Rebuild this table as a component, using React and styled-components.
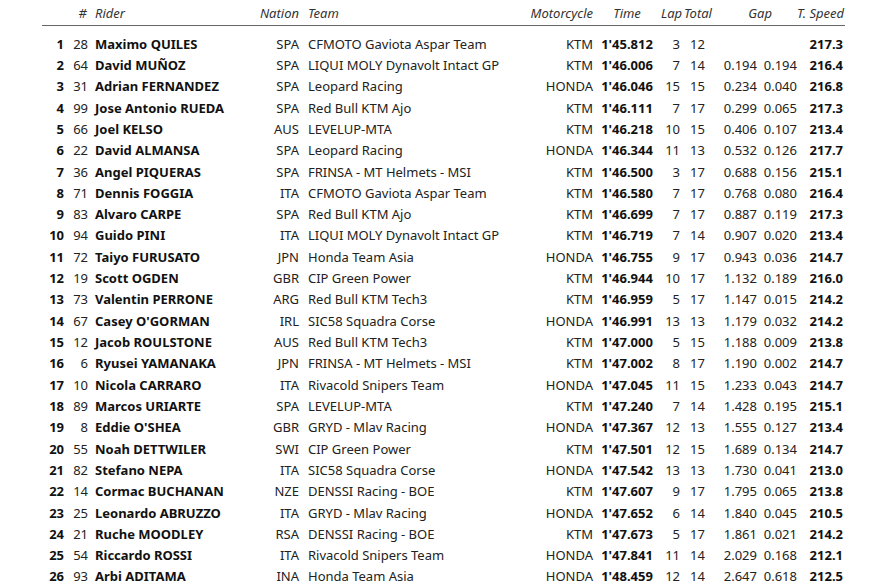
import React from "react";
import styled, { createGlobalStyle } from "styled-components";

const GlobalStyle = createGlobalStyle`
  body {
    margin: 0;
    background: #fff;
    font-family: "Noto Sans", "Open Sans", sans-serif;
  }
`;

const rows = [
  [1, 28, "Maximo QUILES", "SPA", "CFMOTO Gaviota Aspar Team", "KTM", "1'45.812", 3, 12, "", "", "217.3"],
  [2, 64, "David MUÑOZ", "SPA", "LIQUI MOLY Dynavolt Intact GP", "KTM", "1'46.006", 7, 14, "0.194", "0.194", "216.4"],
  [3, 31, "Adrian FERNANDEZ", "SPA", "Leopard Racing", "HONDA", "1'46.046", 15, 15, "0.234", "0.040", "216.8"],
  [4, 99, "Jose Antonio RUEDA", "SPA", "Red Bull KTM Ajo", "KTM", "1'46.111", 7, 17, "0.299", "0.065", "217.3"],
  [5, 66, "Joel KELSO", "AUS", "LEVELUP-MTA", "KTM", "1'46.218", 10, 15, "0.406", "0.107", "213.4"],
  [6, 22, "David ALMANSA", "SPA", "Leopard Racing", "HONDA", "1'46.344", 11, 13, "0.532", "0.126", "217.7"],
  [7, 36, "Angel PIQUERAS", "SPA", "FRINSA - MT Helmets - MSI", "KTM", "1'46.500", 3, 17, "0.688", "0.156", "215.1"],
  [8, 71, "Dennis FOGGIA", "ITA", "CFMOTO Gaviota Aspar Team", "KTM", "1'46.580", 7, 17, "0.768", "0.080", "216.4"],
  [9, 83, "Alvaro CARPE", "SPA", "Red Bull KTM Ajo", "KTM", "1'46.699", 7, 17, "0.887", "0.119", "217.3"],
  [10, 94, "Guido PINI", "ITA", "LIQUI MOLY Dynavolt Intact GP", "KTM", "1'46.719", 7, 14, "0.907", "0.020", "213.4"],
  [11, 72, "Taiyo FURUSATO", "JPN", "Honda Team Asia", "HONDA", "1'46.755", 9, 17, "0.943", "0.036", "214.7"],
  [12, 19, "Scott OGDEN", "GBR", "CIP Green Power", "KTM", "1'46.944", 10, 17, "1.132", "0.189", "216.0"],
  [13, 73, "Valentin PERRONE", "ARG", "Red Bull KTM Tech3", "KTM", "1'46.959", 5, 17, "1.147", "0.015", "214.2"],
  [14, 67, "Casey O'GORMAN", "IRL", "SIC58 Squadra Corse", "HONDA", "1'46.991", 13, 13, "1.179", "0.032", "214.2"],
  [15, 12, "Jacob ROULSTONE", "AUS", "Red Bull KTM Tech3", "KTM", "1'47.000", 5, 15, "1.188", "0.009", "213.8"],
  [16, 6, "Ryusei YAMANAKA", "JPN", "FRINSA - MT Helmets - MSI", "KTM", "1'47.002", 8, 17, "1.190", "0.002", "214.7"],
  [17, 10, "Nicola CARRARO", "ITA", "Rivacold Snipers Team", "HONDA", "1'47.045", 11, 15, "1.233", "0.043", "214.7"],
  [18, 89, "Marcos URIARTE", "SPA", "LEVELUP-MTA", "KTM", "1'47.240", 7, 14, "1.428", "0.195", "215.1"],
  [19, 8, "Eddie O'SHEA", "GBR", "GRYD - Mlav Racing", "HONDA", "1'47.367", 12, 13, "1.555", "0.127", "213.4"],
  [20, 55, "Noah DETTWILER", "SWI", "CIP Green Power", "KTM", "1'47.501", 12, 15, "1.689", "0.134", "214.7"],
  [21, 82, "Stefano NEPA", "ITA", "SIC58 Squadra Corse", "HONDA", "1'47.542", 13, 13, "1.730", "0.041", "213.0"],
  [22, 14, "Cormac BUCHANAN", "NZE", "DENSSI Racing - BOE", "KTM", "1'47.607", 9, 17, "1.795", "0.065", "213.8"],
  [23, 25, "Leonardo ABRUZZO", "ITA", "GRYD - Mlav Racing", "HONDA", "1'47.652", 6, 14, "1.840", "0.045", "210.5"],
  [24, 21, "Ruche MOODLEY", "RSA", "DENSSI Racing - BOE", "KTM", "1'47.673", 5, 17, "1.861", "0.021", "214.2"],
  [25, 54, "Riccardo ROSSI", "ITA", "Rivacold Snipers Team", "HONDA", "1'47.841", 11, 14, "2.029", "0.168", "212.1"],
  [26, 93, "Arbi ADITAMA", "INA", "Honda Team Asia", "HONDA", "1'48.459", 12, 14, "2.647", "0.618", "212.5"],
];

const COLS = "22px 24px 162px 49px 221px 73px 68px 19px 40px 37px 40px 46px";

const Table = styled.div`
  margin-left: 42px;
  width: 803px;
`;

const HeadRow = styled.div`
  display: grid;
  grid-template-columns: ${COLS};
  height: 25px;
  align-items: center;
  border-bottom: 1px solid #666;
  font-size: 13px;
  font-style: italic;
  color: #333;
  white-space: nowrap;
`;

const Body = styled.div`
  padding-top: 7px;
`;

const Row = styled.div`
  display: grid;
  grid-template-columns: ${COLS};
  height: 21.32px;
  align-items: center;
  font-size: 13px;
  color: #222;
  white-space: nowrap;
`;

const Cell = styled.div`
  text-align: ${(p) => p.$align || "left"};
  padding-left: ${(p) => p.$pl || 0}px;
  padding-right: ${(p) => p.$pr || 0}px;
  font-weight: ${(p) => (p.$bold ? 700 : 400)};
  color: ${(p) => (p.$bold ? "#111" : "inherit")};
  grid-column: ${(p) => p.$span || "auto"};
  direction: ${(p) => (p.$align === "right" ? "rtl" : "ltr")};
  unicode-bidi: plaintext;
`;

export default function App() {
  return (
    <>
      <GlobalStyle />
      <Table>
        <HeadRow>
          <Cell />
          <Cell $align="right" $pr={1}>#</Cell>
          <Cell $pl={7}>Rider</Cell>
          <Cell $align="right">Nation</Cell>
          <Cell $pl={9}>Team</Cell>
          <Cell $align="right">Motorcycle</Cell>
          <Cell $align="center">Time</Cell>
          <Cell $align="right" $pr={1}>Lap</Cell>
          <Cell $pl={4}>Total</Cell>
          <Cell $span="span 2" $align="right" $pr={25}>Gap</Cell>
          <Cell $align="right">T. Speed</Cell>
        </HeadRow>
        <Body>
          {rows.map((r) => (
            <Row key={r[0]}>
              <Cell $align="right" $bold>{r[0]}</Cell>
              <Cell $align="right">{r[1]}</Cell>
              <Cell $pl={7} $bold>{r[2]}</Cell>
              <Cell $align="right">{r[3]}</Cell>
              <Cell $pl={9}>{r[4]}</Cell>
              <Cell $align="right">{r[5]}</Cell>
              <Cell $align="center" $bold>{r[6]}</Cell>
              <Cell $align="right">{r[7]}</Cell>
              <Cell $pl={10}>{r[8]}</Cell>
              <Cell $align="right">{r[9]}</Cell>
              <Cell $align="right">{r[10]}</Cell>
              <Cell $align="right" $bold>{r[11]}</Cell>
            </Row>
          ))}
        </Body>
      </Table>
    </>
  );
}
